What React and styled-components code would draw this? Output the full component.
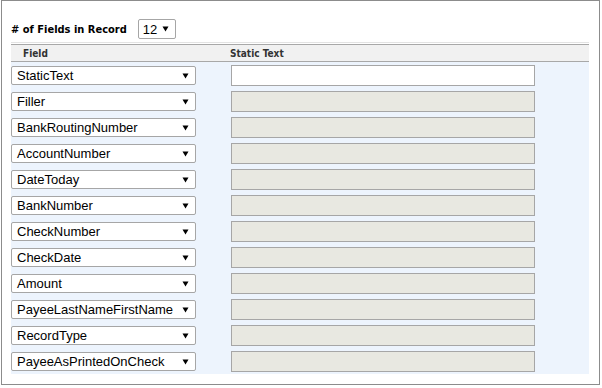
import React from "react";
import styled, { createGlobalStyle } from "styled-components";

const GlobalStyle = createGlobalStyle`
  html, body { margin: 0; padding: 0; background: #ffffff; }
  body { font-family: "Liberation Sans", Arial, sans-serif; }
`;

const Frame = styled.div`
  box-sizing: border-box;
  width: 599px;
  height: 385px;
  margin-left: 1px;
  border: 1px solid #8c8c8c;
  padding: 18px 10px 0 9px;
  background: #ffffff;
`;

const TopBar = styled.div`
  display: flex;
  align-items: center;
  gap: 11px;
  height: 20px;
`;

const Label = styled.span`
  font-family: "DejaVu Sans Condensed", "DejaVu Sans", sans-serif;
  font-weight: bold;
  font-size: 11px;
  color: #000;
`;

const SelectBox = styled.div`
  box-sizing: border-box;
  display: flex;
  align-items: center;
  justify-content: space-between;
  width: ${(p) => p.$width}px;
  height: ${(p) => p.$height}px;
  padding: 0 6px 0 ${(p) => p.$padLeft}px;
  border: 1px solid #a6a6a6;
  border-radius: 2px;
  background: #ffffff;
  font-family: "Liberation Sans", Arial, sans-serif;
  font-size: 13px;
  color: #000;
  white-space: nowrap;
`;

const Rule = styled.div`
  height: 1px;
  margin-top: 3px;
  background: #e3e3e3;
`;

const Header = styled.div`
  box-sizing: border-box;
  display: grid;
  grid-template-columns: 207px 1fr;
  align-items: center;
  height: 18px;
  margin-top: 1px;
  border-top: 1px solid #a8a8a8;
  border-bottom: 1px solid #a8a8a8;
  background: #f1f1f1;
`;

const HeadCell = styled.div`
  padding-left: 12px;
  font-family: "DejaVu Sans Condensed", "DejaVu Sans", sans-serif;
  font-weight: bold;
  font-size: 10px;
  color: #333;
`;

const Body = styled.div`
  box-sizing: border-box;
  display: flex;
  flex-direction: column;
  gap: 6px;
  height: 312px;
  padding-top: 3px;
  background: #edf4fd;
`;

const Row = styled.div`
  display: grid;
  grid-template-columns: 220px 304px;
  align-items: center;
  height: 20px;
`;

const TextInput = styled.div`
  box-sizing: border-box;
  width: 304px;
  height: 21px;
  border: 1px solid #a6a6a6;
  background: ${(p) => (p.$disabled ? "#e8e8e1" : "#ffffff")};
`;

const Arrow = () => (
  <svg width="7" height="6" viewBox="0 0 7 6" aria-hidden="true">
    <polygon points="0.5,0.5 6.5,0.5 3.5,5.5" fill="#000" />
  </svg>
);

const fields = [
  "StaticText",
  "Filler",
  "BankRoutingNumber",
  "AccountNumber",
  "DateToday",
  "BankNumber",
  "CheckNumber",
  "CheckDate",
  "Amount",
  "PayeeLastNameFirstName",
  "RecordType",
  "PayeeAsPrintedOnCheck",
];

export default function App() {
  return (
    <>
      <GlobalStyle />
      <Frame>
        <TopBar>
          <Label># of Fields in Record</Label>
          <SelectBox $width={38} $height={20} $padLeft={4}>
            <span>12</span>
            <Arrow />
          </SelectBox>
        </TopBar>
        <Rule />
        <Header>
          <HeadCell>Field</HeadCell>
          <HeadCell>Static Text</HeadCell>
        </Header>
        <Body>
          {fields.map((f, i) => (
            <Row key={f}>
              <SelectBox $width={185} $height={19} $padLeft={5}>
                <span>{f}</span>
                <Arrow />
              </SelectBox>
              <TextInput $disabled={i !== 0} />
            </Row>
          ))}
        </Body>
      </Frame>
    </>
  );
}
